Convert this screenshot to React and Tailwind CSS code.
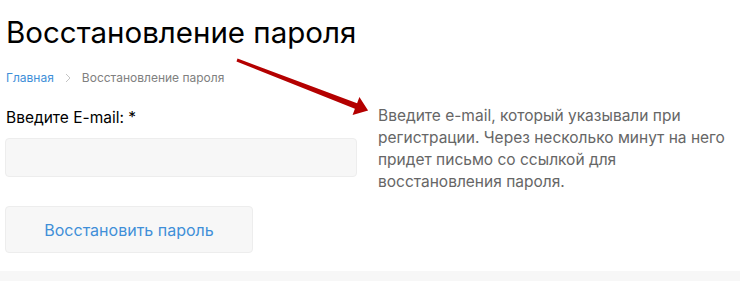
import React from "react";

const FONT = { fontFamily: "Inter, Roboto, 'Noto Sans', sans-serif" };

// красная стрелка-аннотация поверх страницы
function Arrow() {
  return (
    <svg
      className="absolute left-0 top-0 pointer-events-none"
      width="740"
      height="281"
      viewBox="0 0 740 281"
    >
      <polygon
        fill="#b40000"
        points="237.5,58.6 357.1,103.2 359.4,97.1 368.1,110.6 352.6,114.9 354.9,108.8 236.5,61.4"
      />
    </svg>
  );
}

export default function App() {
  return (
    <div className="relative w-[740px] h-[281px] bg-white overflow-hidden" style={FONT}>
      <div className="pl-[6px] pt-[14px]">
        <h1 className="text-[29.5px] leading-[36px] text-black font-normal">
          Восстановление пароля
        </h1>

        {/* хлебные крошки */}
        <div className="flex items-center mt-[20px] text-[12px] leading-[16px]">
          <a href="#" className="text-[#3f8fd8]">Главная</a>
          <svg className="mx-[10px]" width="8" height="10" viewBox="0 0 8 10">
            <path d="M2 1 L6 5 L2 9" fill="none" stroke="#c4c4c4" strokeWidth="1" />
          </svg>
          <span className="text-[#808080]">Восстановление пароля</span>
        </div>

        <div className="flex mt-[22px]">
          {/* форма */}
          <div className="w-[352px] -ml-px">
            <label className="block pl-px text-[15.5px] leading-[20px] text-black">
              Введите E-mail: *
            </label>
            <input
              type="email"
              className="block mt-[10px] w-[352px] h-[39px] rounded-[4px] bg-[#f7f7f7] border border-[#ededed] outline-none"
            />
            <button
              type="button"
              className="block mt-[29px] w-[248px] h-[47px] rounded-[4px] bg-[#f7f7f7] border border-[#ededed] text-[16px] text-[#3f8fd8]"
            >
              Восстановить пароль
            </button>
          </div>

          {/* пояснение */}
          <p className="ml-[21px] mt-[-3px] w-[362px] text-[15.5px] leading-[22px] text-[#666666]">
            Введите e-mail, который указывали при регистрации. Через несколько минут на него придет письмо со ссылкой для восстановления пароля.
          </p>
        </div>
      </div>

      <div className="absolute left-0 right-0 bottom-0 h-[10px] bg-[#f7f7f7]" />
      <Arrow />
    </div>
  );
}
